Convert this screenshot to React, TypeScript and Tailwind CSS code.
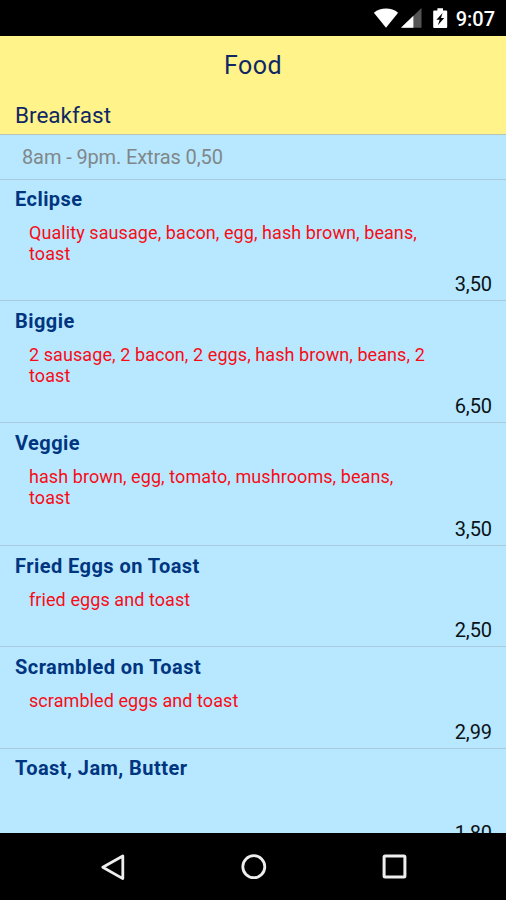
type MenuItem = {
  name: string;
  description: string;
  price: string;
  rowClass: string;
};

const items: MenuItem[] = [
  {
    name: "Eclipse",
    description: "Quality sausage, bacon, egg, hash brown, beans, toast",
    price: "3,50",
    rowClass: "h-[121px] pt-[7px]",
  },
  {
    name: "Biggie",
    description: "2 sausage, 2 bacon, 2 eggs, hash brown, beans, 2 toast",
    price: "6,50",
    rowClass: "h-[122px] pt-2",
  },
  {
    name: "Veggie",
    description: "hash brown, egg, tomato, mushrooms, beans, toast",
    price: "3,50",
    rowClass: "h-[123px] pt-2",
  },
  {
    name: "Fried Eggs on Toast",
    description: "fried eggs and toast",
    price: "2,50",
    rowClass: "h-[101px] pt-2",
  },
  {
    name: "Scrambled on Toast",
    description: "scrambled eggs and toast",
    price: "2,99",
    rowClass: "h-[102px] pt-2",
  },
  {
    name: "Toast, Jam, Butter",
    description: "",
    price: "1,80",
    rowClass: "h-[101px] pt-[7px]",
  },
];

function StatusBar() {
  return (
    <div className="flex h-9 shrink-0 items-center justify-end bg-black pr-[11px] text-white">
      <svg width="26" height="22" viewBox="0 0 26 22" fill="currentColor">
        <path d="M13 20.8 0.9 5.8C4.3 3 8.5 1.6 13 1.6s8.7 1.4 12.1 4.2z" />
      </svg>
      <svg className="ml-[2px]" width="21" height="22" viewBox="0 0 21 22">
        <path d="M0 20.8 20.5 1v19.8z" fill="#555" />
        <path d="M0 20.8 12.4 8.8v12z" fill="#fff" />
      </svg>
      <svg className="ml-[11px]" width="15" height="22" viewBox="0 0 15 22">
        <path
          d="M1.2 3.4h3.2V1.2h5.6v2.2h3.2q1 0 1 1v15.6q0 1-1 1H1.2q-1 0-1-1V4.4q0-1 1-1z"
          fill="#fff"
        />
        <path d="M9.6 6 3.4 12.7h3.3L4.9 18.2l6.3-7.3H8z" fill="#000" />
      </svg>
      <span className="mt-[2px] ml-2 text-[20px] leading-6 font-medium">9:07</span>
    </div>
  );
}

function MenuRow({ item }: { item: MenuItem }) {
  return (
    <div
      className={`flex shrink-0 flex-col border-b border-[#a9cbdc] pr-[14px] pl-[15px] ${item.rowClass}`}
    >
      <h3 className="text-[20px] leading-6 font-bold tracking-[0.45px] text-[#003580]">
        {item.name}
      </h3>
      <p className="mt-[11px] ml-[14px] w-[402px] text-[18px] leading-[21px] tracking-[0.08px] text-[#f80c16]">
        {item.description}
      </p>
      <span className="mt-auto mb-[4px] self-end text-[20px] leading-6 tracking-[-0.1px] text-[#0a1216]">
        {item.price}
      </span>
    </div>
  );
}

function NavBar() {
  return (
    <div className="grid h-[67px] shrink-0 grid-cols-[1fr_27px_1fr] items-center bg-black text-[#eee]">
      <svg className="mr-[114px] justify-self-end" width="27" height="30" viewBox="0 0 27 30" fill="none">
        <path d="M23.8 4v22.6L3.8 15.2z" stroke="currentColor" strokeWidth="2.8" strokeLinejoin="round" />
      </svg>
      <svg width="27" height="27" viewBox="0 0 27 27" fill="none">
        <circle cx="13.8" cy="13.7" r="11" stroke="currentColor" strokeWidth="2.8" />
      </svg>
      <svg className="ml-[114px]" width="27" height="27" viewBox="0 0 27 27" fill="none">
        <rect x="3.1" y="3.1" width="20.8" height="20.8" rx="1" stroke="currentColor" strokeWidth="3" />
      </svg>
    </div>
  );
}

export default function App() {
  return (
    <div className="flex h-[900px] w-[506px] flex-col overflow-hidden bg-[#b8e8ff] font-['Roboto',sans-serif]">
      <StatusBar />
      <header className="flex h-[99px] shrink-0 flex-col border-b border-[#b9c3b5] bg-[#fff38a] text-[#0f2864]">
        <h1 className="mt-[15px] text-center text-[25px] leading-[30px] tracking-[0.5px]">
          Food
        </h1>
        <h2 className="mt-5 ml-[15px] text-[22.5px] leading-7">Breakfast</h2>
      </header>
      <p className="h-[45px] shrink-0 border-b border-[#a9cbdc] pl-[22px] text-[20px] leading-[45px] tracking-[-0.12px] text-[#808789]">
        8am - 9pm. Extras 0,50
      </p>
      <main className="flex min-h-0 flex-1 flex-col overflow-hidden">
        {items.map((item) => (
          <MenuRow key={item.name} item={item} />
        ))}
      </main>
      <NavBar />
    </div>
  );
}
